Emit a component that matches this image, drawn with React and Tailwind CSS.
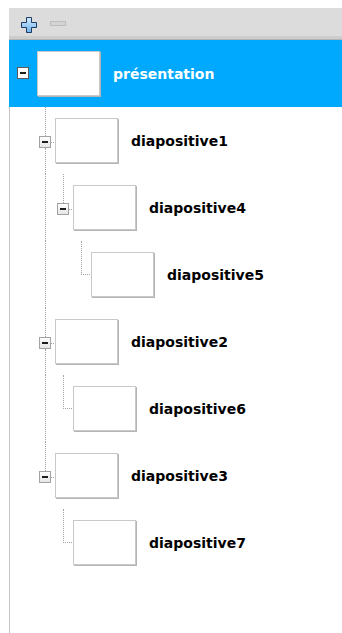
import React from 'react';

const dots = 'border-dotted border-[#a3a3a3]';

const rows = [
  { label: 'diapositive1', guides: [], kind: 'open', cont: true },
  { label: 'diapositive4', guides: [true], kind: 'open', cont: false },
  { label: 'diapositive5', guides: [true, false], kind: 'leaf', cont: false },
  { label: 'diapositive2', guides: [], kind: 'open', cont: true },
  { label: 'diapositive6', guides: [true], kind: 'leaf', cont: false },
  { label: 'diapositive3', guides: [], kind: 'open', cont: false },
  { label: 'diapositive7', guides: [false], kind: 'leaf', cont: false },
];

function Thumb({ className = '' }) {
  return (
    <div
      className={`w-[63px] h-[45px] shrink-0 bg-white border border-[#c9c9c9] shadow-[1px_1px_0_#b4b4b4] ${className}`}
    />
  );
}

function MinusBox({ dark }) {
  return (
    <div
      className={`w-[12px] h-[12px] shrink-0 flex items-center justify-center border ${
        dark ? 'border-[#5a5a5a] bg-white' : 'border-[#a2a2a2] bg-gradient-to-b from-white to-[#e6e6e6]'
      }`}
    >
      <div className="w-[6px] h-[2px] bg-[#1e1e1e]" />
    </div>
  );
}

function Connector({ kind, cont }) {
  if (kind === 'leaf') {
    return (
      <div className="w-[18px] shrink-0">
        <div className={`ml-[9px] h-[34px] border-l border-b ${dots}`} />
      </div>
    );
  }
  return (
    <div className="w-[18px] shrink-0 flex flex-col">
      <div className={`ml-[9px] h-[29px] border-l ${dots}`} />
      <div className="flex items-center h-[12px]">
        <div className="ml-[3px]">
          <MinusBox />
        </div>
        <div className={`flex-1 border-t ${dots}`} />
      </div>
      {cont && <div className={`ml-[9px] flex-1 border-l ${dots}`} />}
    </div>
  );
}

function TreeRow({ row }) {
  return (
    <div className="flex h-[67px]">
      <div className="w-[26px] shrink-0" />
      {row.guides.map((g, i) => (
        <div key={i} className="w-[18px] shrink-0">
          {g && <div className={`ml-[9px] h-full border-l ${dots}`} />}
        </div>
      ))}
      <Connector kind={row.kind} cont={row.cont} />
      <div className="flex items-start">
        <Thumb className="mt-[11px] ml-px" />
        <span className="ml-[13px] mt-[26px] text-[14px] leading-[16px] font-bold text-black whitespace-nowrap">
          {row.label}
        </span>
      </div>
    </div>
  );
}

export default function App() {
  return (
    <div className="w-[342px] h-[633px] overflow-hidden bg-white pt-[8px] pl-[9px] font-['DejaVu_Sans',sans-serif]">
      <div className="h-full border-l border-[#c4c4c4] flex flex-col">
        {/* toolbar */}
        <div className="-ml-px">
          <div className="h-[28px] bg-[#dcdcdc] flex items-center">
            <svg className="ml-[12px] mt-[5px]" width="16" height="16" viewBox="0 0 16 16">
              <defs>
                <linearGradient id="pl" x1="0" y1="0" x2="0" y2="1">
                  <stop offset="0" stopColor="#d4ecff" />
                  <stop offset="1" stopColor="#6cb2ea" />
                </linearGradient>
              </defs>
              <path
                d="M5.5 0.5H10.5V5.5H15.5V10.5H10.5V15.5H5.5V10.5H0.5V5.5H5.5Z"
                fill="url(#pl)"
                stroke="#1d3b66"
              />
            </svg>
            <div className="ml-[13px] mt-[3px] w-[16px] h-[5px] bg-[#d4d4d4] border border-[#bdbdbd]" />
          </div>
          <div className="h-[3px] bg-[#cdcdcd]" />
          <div className="h-px bg-[#b3b3b3]" />
        </div>

        {/* root node */}
        <div className="-ml-px h-[67px] bg-[#00a9fd] flex items-start">
          <div className="ml-[8px] mt-[27px]">
            <MinusBox dark />
          </div>
          <Thumb className="ml-[8px] mt-[11px]" />
          <span className="ml-[13px] mt-[26px] text-[14px] leading-[16px] font-bold text-white whitespace-nowrap">
            présentation
          </span>
        </div>

        {/* children */}
        {rows.map((r) => (
          <TreeRow key={r.label} row={r} />
        ))}
      </div>
    </div>
  );
}
